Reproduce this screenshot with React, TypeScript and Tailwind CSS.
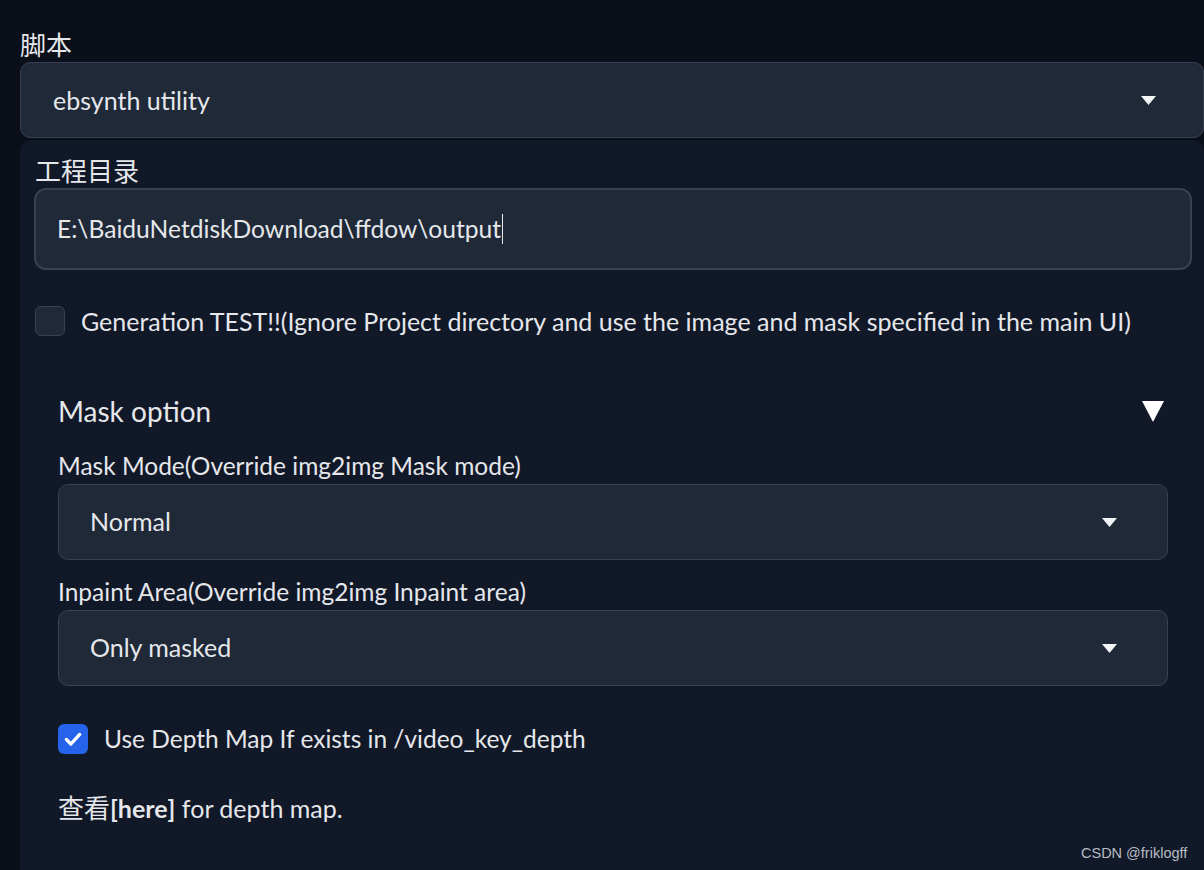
import React from "react";

const Caret = () => (
  <svg width="15" height="9" viewBox="0 0 15 9" className="shrink-0">
    <polygon points="0,0 15,0 7.5,9" fill="#f3f4f6" />
  </svg>
);

export default function App() {
  return (
    <div className="w-[1204px] h-[870px] overflow-hidden bg-[#0b0f19] text-[#e5e7eb] font-['Lato','Noto_Sans_CJK_SC',sans-serif] relative">
      <div className="pl-[20px] pt-[28px]">
        <div className="text-[26px] leading-[32px] h-[34px] font-['Noto_Sans_CJK_SC',sans-serif]">脚本</div>
        <div className="h-[76px] rounded-[10px] border border-[#374151] bg-[#1f2937] flex items-center justify-between pl-[32px] pr-[47px]">
          <span className="text-[25px] leading-[32px]">ebsynth utility</span>
          <Caret />
        </div>
        <div className="mt-[2px] h-[800px] bg-[#111827] rounded-t-[10px] pl-[14px] pr-[12px] pt-[14px]">
          <div className="text-[26px] leading-[32px] h-[34px] font-['Noto_Sans_CJK_SC',sans-serif] pl-[1px]">工程目录</div>
          <div className="h-[82px] rounded-[12px] border-2 border-[#374151] bg-[#1f2937] flex items-center pl-[21px]">
            <span className="text-[24.6px] leading-[32px]">E:\BaiduNetdiskDownload\ffdow\output</span>
            <span className="w-px h-[30px] bg-[#e5e7eb] ml-[1px]" />
          </div>
          <div className="mt-[35px] flex items-center gap-[16px] pl-[1px]">
            <div className="w-[30px] h-[30px] rounded-[6px] border border-[#374151] bg-[#1f2937]" />
            <span className="text-[25px] leading-[32px]">Generation TEST!!(Ignore Project directory and use the image and mask specified in the main UI)</span>
          </div>
          <div className="mt-[52px] px-[24px]">
            <div className="flex items-center justify-between h-[44px]">
              <span className="text-[28px]">Mask option</span>
              <svg width="22" height="22" viewBox="0 0 22 22" className="mr-[4px]">
                <polygon points="0,1 22,1 11,22" fill="#ffffff" />
              </svg>
            </div>
            <div className="mt-[18px] text-[24.5px] leading-[30px]">Mask Mode(Override img2img Mask mode)</div>
            <div className="mt-[3px] h-[76px] rounded-[10px] border border-[#374151] bg-[#1f2937] flex items-center justify-between pl-[31px] pr-[50px]">
              <span className="text-[25px]">Normal</span>
              <Caret />
            </div>
            <div className="mt-[17px] text-[24.5px] leading-[30px]">Inpaint Area(Override img2img Inpaint area)</div>
            <div className="mt-[3px] h-[76px] rounded-[10px] border border-[#374151] bg-[#1f2937] flex items-center justify-between pl-[31px] pr-[50px]">
              <span className="text-[25px]">Only masked</span>
              <Caret />
            </div>
            <div className="mt-[37px] flex items-center gap-[16px]">
              <div className="w-[30px] h-[30px] rounded-[6px] bg-[#2563eb] flex items-center justify-center">
                <svg width="20" height="20" viewBox="0 0 24 24" fill="none" stroke="#ffffff" strokeWidth="4" strokeLinecap="round" strokeLinejoin="round">
                  <polyline points="4,12.5 9.5,18 20,6.5" />
                </svg>
              </div>
              <span className="text-[24.5px] leading-[32px]">Use Depth Map If exists in /video_key_depth</span>
            </div>
            <div className="mt-[36px] text-[25px] leading-[32px]">
              <span className="font-['Noto_Sans_CJK_SC',sans-serif] text-[26px]">查看</span>
              <span className="font-bold">[here]</span> for depth map.
            </div>
          </div>
        </div>
      </div>
      <div className="absolute left-[1081px] top-[843px] text-[14.5px] text-[#b8bcc4] font-['Liberation_Sans',sans-serif]">CSDN @friklogff</div>
    </div>
  );
}
